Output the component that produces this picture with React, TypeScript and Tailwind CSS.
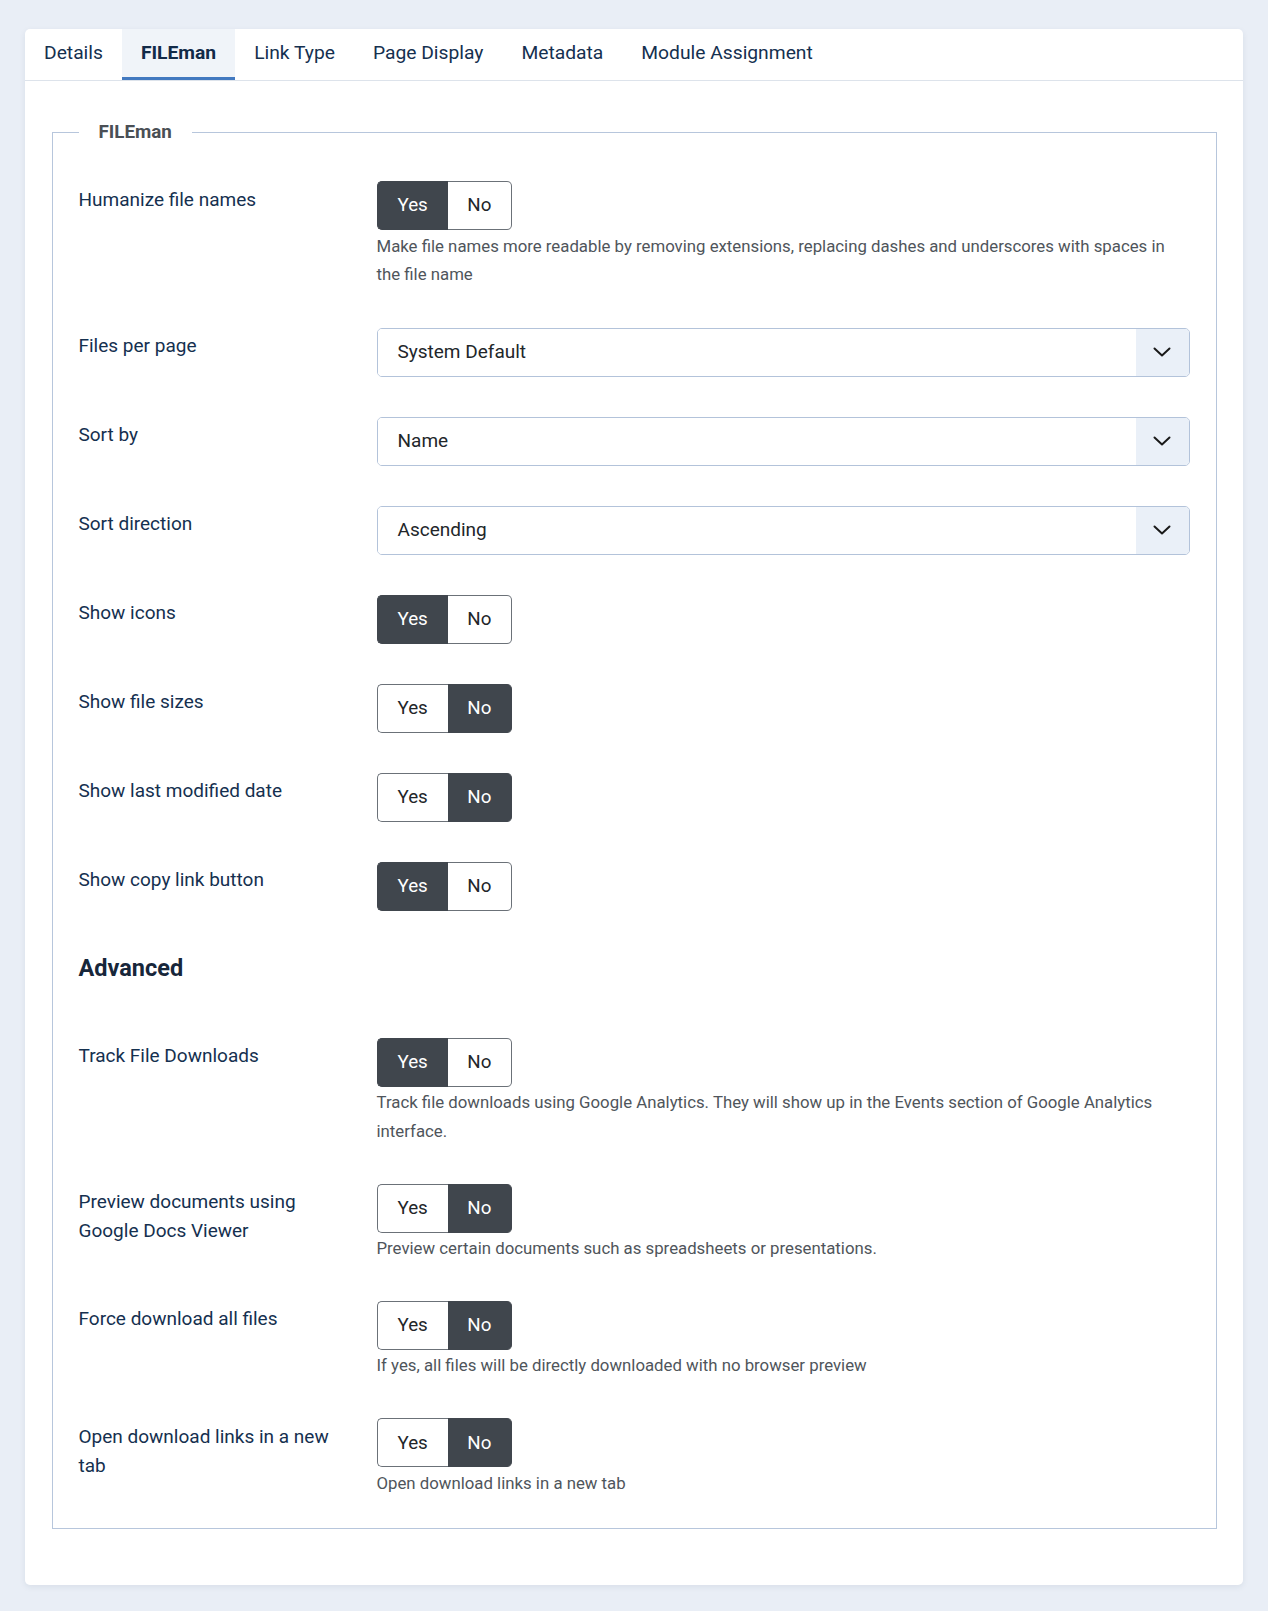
import React from "react";

const FONT = { fontFamily: "Roboto, 'Noto Sans', 'Liberation Sans', sans-serif" };

type ToggleProps = { value: boolean };

function Toggle({ value }: ToggleProps) {
  const dark = "bg-[#40464d] border-[#40464d] text-white";
  const light = "bg-white border-[#6b7178] text-[#22262a]";
  return (
    <div className="flex h-[49px] w-max text-[18.75px]">
      <div
        className={
          "flex items-center px-5 rounded-l-[5px] border-l border-y " +
          (value ? dark : light)
        }
      >
        Yes
      </div>
      <div
        className={
          "flex items-center pl-[19.5px] pr-5 rounded-r-[5px] border-r border-y " +
          (!value ? dark : light)
        }
      >
        No
      </div>
    </div>
  );
}

function Select({ value }: { value: string }) {
  return (
    <div className="flex h-[49px] w-full rounded-[5px] border border-[#b3c3da] overflow-hidden">
      <div className="flex flex-1 items-center pl-[20px] text-[19px] text-[#22262a] bg-white">
        {value}
      </div>
      <div className="flex w-[53px] items-center justify-center bg-[#eaf0f8]">
        <svg width="18" height="10" viewBox="0 0 18 10" fill="none">
          <path
            d="M1.5 1.5 L9 8.5 L16.5 1.5"
            stroke="#1a1a1a"
            strokeWidth="2"
            strokeLinecap="round"
            strokeLinejoin="round"
          />
        </svg>
      </div>
    </div>
  );
}

function Row({
  label,
  children,
  desc,
}: {
  label: string;
  children: React.ReactNode;
  desc?: string;
}) {
  return (
    <div className="grid grid-cols-[298px_1fr]">
      <div className="pt-[4.5px] pr-[24px] text-[19px] leading-[28.8px] text-[#15304f]">
        {label}
      </div>
      <div>
        {children}
        {desc && (
          <div className="pt-[1.5px] -mb-[1.5px] text-[16.8px] leading-[28.8px] text-[#4f555b]">
            {desc}
          </div>
        )}
      </div>
    </div>
  );
}

const tabs = ["Details", "FILEman", "Link Type", "Page Display", "Metadata", "Module Assignment"];

export default function App() {
  return (
    <div className="min-h-screen bg-[#e9eef6] px-[25px] pt-[29px] pb-[24px]" style={FONT}>
      <div className="bg-white rounded-[5px] shadow-[0_2px_6px_rgba(30,50,80,0.08)]">
        <div className="flex border-b border-[#dde3eb]">
          {tabs.map((t) => {
            const active = t === "FILEman";
            return (
              <div
                key={t}
                className={
                  "flex h-[51px] items-center px-[19px] text-[19.25px] border-b-[3px] " +
                  (active
                    ? "bg-[#f0f4f9] border-[#4279c0] font-bold text-[#112a48]"
                    : "border-transparent text-[#15304f]")
                }
              >
                {t}
              </div>
            );
          })}
        </div>

        <div className="px-[26.5px] pt-[37.5px] pb-[56px]">
          <fieldset className="border border-[#b7c6dc] px-[26px] pt-[35.5px] pb-[32px]">
            <legend className="px-[20px] text-[18.8px] leading-[27px] font-bold text-[#4a4f55]">
              FILEman
            </legend>

            <div className="flex flex-col gap-[40px]">
              <Row
                label="Humanize file names"
                desc="Make file names more readable by removing extensions, replacing dashes and underscores with spaces in the file name"
              >
                <Toggle value={true} />
              </Row>
              <Row label="Files per page">
                <Select value="System Default" />
              </Row>
              <Row label="Sort by">
                <Select value="Name" />
              </Row>
              <Row label="Sort direction">
                <Select value="Ascending" />
              </Row>
              <Row label="Show icons">
                <Toggle value={true} />
              </Row>
              <Row label="Show file sizes">
                <Toggle value={false} />
              </Row>
              <Row label="Show last modified date">
                <Toggle value={false} />
              </Row>
              <Row label="Show copy link button">
                <Toggle value={true} />
              </Row>
            </div>

            <h3 className="mt-[43px] mb-[56px] text-[23.5px] leading-[28px] font-bold text-[#17263a]">
              Advanced
            </h3>

            <div className="flex flex-col gap-[39.5px]">
              <Row
                label="Track File Downloads"
                desc="Track file downloads using Google Analytics. They will show up in the Events section of Google Analytics interface."
              >
                <Toggle value={true} />
              </Row>
              <Row
                label="Preview documents using Google Docs Viewer"
                desc="Preview certain documents such as spreadsheets or presentations."
              >
                <Toggle value={false} />
              </Row>
              <Row
                label="Force download all files"
                desc="If yes, all files will be directly downloaded with no browser preview"
              >
                <Toggle value={false} />
              </Row>
              <Row
                label="Open download links in a new tab"
                desc="Open download links in a new tab"
              >
                <Toggle value={false} />
              </Row>
            </div>
          </fieldset>
        </div>
      </div>
    </div>
  );
}
